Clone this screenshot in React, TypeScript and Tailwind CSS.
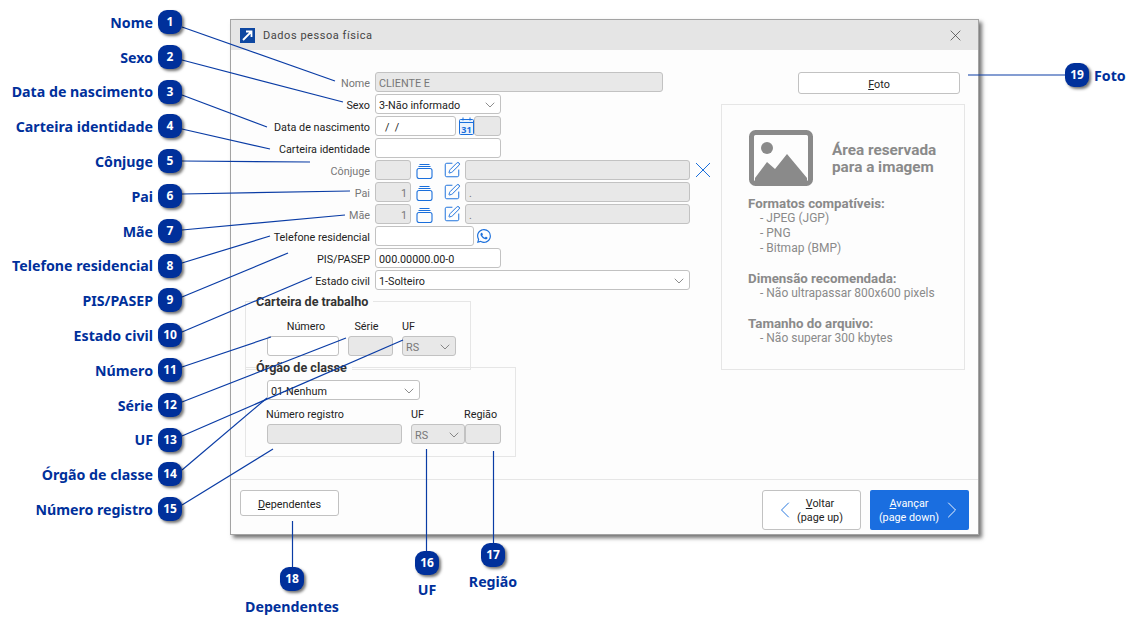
import { ReactNode } from "react"
import { ChevronDown, ChevronLeft, ChevronRight, SquarePen } from "lucide-react"
import { BsWhatsapp } from "react-icons/bs"

const leftCallouts = [
  "Nome", "Sexo", "Data de nascimento", "Carteira identidade", "Cônjuge", "Pai", "Mãe",
  "Telefone residencial", "PIS/PASEP", "Estado civil", "Número", "Série", "UF",
  "Órgão de classe", "Número registro",
]

// leader lines, from the badge to the field it explains
const leaders = [
  [182, 27, 335, 81],
  [182, 60, 343, 102],
  [182, 95, 267, 127],
  [182, 129, 270, 149],
  [182, 161, 310, 162],
  [182, 194, 350, 191],
  [182, 230, 345, 215],
  [182, 263, 270, 236],
  [182, 297, 288, 253],
  [182, 332, 312, 277],
  [182, 367, 271, 337],
  [182, 402, 346, 338],
  [182, 436, 403, 340],
  [182, 470, 267, 398],
  [182, 505, 273, 449],
  [426.5, 449, 426.5, 552],
  [493.5, 451, 493.5, 544],
  [292.5, 521, 292.5, 568],
  [968, 75, 1066, 75],
]

function Badge({ n }: { n: number }) {
  return (
    <div className="flex h-[24px] w-[24px] shrink-0 items-center justify-center rounded-[9px] bg-[#00309b] text-[12px] font-bold text-white shadow-[2px_2px_3px_rgba(0,0,0,0.55)]">
      {n}
    </div>
  )
}

function Caption({ children }: { children: ReactNode }) {
  return <span className="pt-[2px] text-[14.2px] leading-none font-bold whitespace-nowrap text-[#00309b]">{children}</span>
}

function Field({ width, disabled, children, trailing, className = "" }: { width: string; disabled?: boolean; children?: ReactNode; trailing?: ReactNode; className?: string }) {
  return (
    <div
      className={`flex h-[20px] shrink-0 items-center rounded-[3px] border border-[#c2c2c2] px-[3px] pt-[1px] text-[10.8px] ${width} ${
        disabled ? "bg-[#e8e8e8] text-[#777777]" : "bg-white text-[#222222]"
      } ${className}`}
    >
      <span className="pt-[4px] whitespace-pre">{children}</span>
      {trailing}
    </div>
  )
}

function Select({ width, disabled, value }: { width: string; disabled?: boolean; value: string }) {
  return (
    <Field
      width={width}
      disabled={disabled}
      className="justify-between"
      trailing={<ChevronDown size={16} strokeWidth={1} className="mr-[-1px] text-[#555555]" />}
    >
      {value}
    </Field>
  )
}

function Row({ label, muted, children }: { label: string; muted?: boolean; children: ReactNode }) {
  return (
    <div className="flex h-[20px] items-center">
      <span className={`w-[139px] pt-[5px] text-right text-[10.8px] ${muted ? "text-[#777777]" : "text-[#222222]"}`}>{label}</span>
      <div className="ml-[5px] flex items-center">{children}</div>
    </div>
  )
}

function Cross({ size, className }: { size: number; className: string }) {
  return (
    <svg width={size} height={size} viewBox="0 0 16 16" fill="none" stroke="currentColor" strokeWidth="1" className={`shrink-0 ${className}`}>
      <path d="M1 1 L15 15 M15 1 L1 15" />
    </svg>
  )
}

function StackIcon() {
  return (
    <svg width="17" height="17" viewBox="0 0 17 17" fill="none" stroke="#1a6fdc" strokeWidth="1.1" className="ml-[5px] shrink-0">
      <rect x="1" y="6.5" width="15" height="10" rx="2" />
      <path d="M2.5 4.5h12M3.5 2.5h10" />
    </svg>
  )
}

function PersonTools({ code }: { code?: string }) {
  return (
    <>
      <Field width="w-[36px]" disabled className="justify-end">{code}</Field>
      <StackIcon />
      <SquarePen size={18} strokeWidth={1.3} className="ml-[10px] shrink-0 text-[#1a6fdc]" />
    </>
  )
}

function CalendarIcon() {
  return (
    <svg width="15" height="19" viewBox="0 0 15 19" className="ml-[3px] mt-[1px] shrink-0">
      <rect x="0.5" y="2.5" width="14" height="15" rx="1" fill="#eaf2fd" stroke="#1a6fdc" />
      <path d="M0.5 5.5h14M4 0.5v3M11 0.5v3" stroke="#1a6fdc" fill="none" />
      <text x="7.5" y="15.5" textAnchor="middle" fontSize="9" fontWeight="700" fill="#1a6fdc" fontFamily="Noto Sans, sans-serif">31</text>
    </svg>
  )
}

function ImageIcon() {
  return (
    <svg width="64" height="56" viewBox="0 0 64 56" className="shrink-0">
      <rect x="2.5" y="2.5" width="59" height="51" rx="4" fill="#fdfdfd" stroke="#8a8a8a" strokeWidth="5" />
      <circle cx="18" cy="18" r="6" fill="#8a8a8a" />
      <path d="M6 48 L18 32 L26 39 L38 24 L58 48 V52 H6 Z" fill="#8a8a8a" />
    </svg>
  )
}

function Group({ title, className, children }: { title: string; className: string; children: ReactNode }) {
  return (
    <div className={`relative ml-[14px] border border-[#e6e6e6] ${className}`}>
      <span className="absolute top-[-7px] left-[10px] bg-[#fdfdfd] pr-[5px] text-[12.6px] leading-[14px] font-bold text-[#333333]">{title}</span>
      {children}
    </div>
  )
}

function Button({ children, className = "" }: { children: ReactNode; className?: string }) {
  return (
    <div className={`flex items-center rounded-[3px] border border-[#c2c2c2] bg-white text-[10.8px] text-[#222222] ${className}`}>
      {children}
    </div>
  )
}

function Dialog() {
  return (
    <div className="absolute top-[19px] left-[230px] flex h-[516px] w-[749px] flex-col border border-[#a3a3a3] bg-[#fdfdfd] font-['Roboto',sans-serif] shadow-[3px_3px_4px_rgba(0,0,0,0.55)]">
      <div className="flex h-[30px] shrink-0 items-center bg-[#e5e5e5] pr-[17px] pl-[9px]">
        <svg width="15" height="15" viewBox="0 0 15 15" className="shrink-0">
          <rect width="15" height="15" fill="#0d47a1" />
          <path d="M3 12 L11 4 M6 3.5 H11.5 V9" stroke="#ffffff" strokeWidth="1.8" fill="none" />
        </svg>
        <span className="ml-[8px] pt-[3px] text-[11px] tracking-[0.55px] text-[#444444]">Dados pessoa física</span>
        <Cross size={11} className="ml-auto text-[#333333]" />
      </div>

      <div className="flex flex-1">
        <div className="w-[484px] shrink-0 pt-[22px]">
          <div className="flex flex-col gap-[2px]">
            <Row label="Nome" muted><Field width="w-[288px]" disabled>CLIENTE E</Field></Row>
            <Row label="Sexo"><Select width="w-[126px]" value="3-Não informado" /></Row>
            <Row label="Data de nascimento">
              <Field width="w-[81px]" className="pl-[9px]">/  /</Field>
              <CalendarIcon />
              <Field width="w-[27px]" disabled />
            </Row>
            <Row label="Carteira identidade"><Field width="w-[126px]" /></Row>
            <Row label="Cônjuge" muted>
              <PersonTools />
              <Field width="w-[225px]" disabled className="ml-[4px]" />
              <Cross size={16} className="ml-[5px] text-[#1a6fdc]" />
            </Row>
            <Row label="Pai" muted>
              <PersonTools code="1" />
              <Field width="w-[225px]" disabled className="ml-[4px]">.</Field>
            </Row>
            <Row label="Mãe" muted>
              <PersonTools code="1" />
              <Field width="w-[225px]" disabled className="ml-[4px]">.</Field>
            </Row>
            <Row label="Telefone residencial">
              <Field width="w-[99px]" />
              <BsWhatsapp size={14} className="ml-[3px] text-[#1a6fdc]" />
            </Row>
            <Row label="PIS/PASEP"><Field width="w-[126px]">000.00000.00-0</Field></Row>
            <Row label="Estado civil"><Select width="w-[315px]" value="1-Solteiro" /></Row>
          </div>

          <Group title="Carteira de trabalho" className="mt-[11px] h-[69px] w-[226px]">
            <div className="flex gap-[9px] pt-[16px] pl-[21px] text-[10.8px] text-[#222222]">
              <div className="w-[72px]">
                <div className="h-[18px] pl-[6px] text-center leading-[18px]">Número</div>
                <Field width="w-[72px]" />
              </div>
              <div className="w-[45px]">
                <div className="h-[18px] pr-[8px] text-center leading-[18px]">Série</div>
                <Field width="w-[45px]" disabled />
              </div>
              <div className="w-[54px]">
                <div className="h-[18px] leading-[18px]">UF</div>
                <Select width="w-[54px]" disabled value="RS" />
              </div>
            </div>
          </Group>

          <Group title="Órgão de classe" className="mt-[-3px] h-[90px] w-[271px]">
            <div className="pt-[12px] pl-[21px] text-[10.8px] text-[#222222]">
              <Select width="w-[153px]" value="01-Nenhum" />
              <div className="mt-[5px] flex">
                <div className="w-[135px]">
                  <div className="ml-[-1px] h-[19px] leading-[19px]">Número registro</div>
                  <Field width="w-[135px]" disabled />
                </div>
                <div className="ml-[9px] w-[54px]">
                  <div className="h-[19px] leading-[19px]">UF</div>
                  <Select width="w-[54px]" disabled value="RS" />
                </div>
                <div className="w-[36px]">
                  <div className="ml-[-1px] h-[19px] leading-[19px]">Região</div>
                  <Field width="w-[36px]" disabled />
                </div>
              </div>
            </div>
          </Group>
        </div>

        <div className="flex-1 pt-[22px] pl-[6px]">
          <Button className="ml-[77px] h-[22px] w-[162px] justify-center pt-[5px]"><span><u>F</u>oto</span></Button>
          <div className="mt-[10px] h-[266px] w-[244px] border border-[#e6e6e6] pt-[25px] pl-[26px] text-[12px] leading-[15px] text-[#8a8a8a]">
            <div className="flex items-center pl-[1px]">
              <ImageIcon />
              <div className="ml-[19px] pt-[2px] text-[15.3px] leading-[17px] font-bold">Área reservada<br />para a imagem</div>
            </div>
            <div className="mt-[10px] text-[13.3px] font-bold">Formatos compatíveis:</div>
            <div className="pl-[12px]">- JPEG (JGP)</div>
            <div className="pl-[12px]">- PNG</div>
            <div className="pl-[12px]">- Bitmap (BMP)</div>
            <div className="mt-[15px] text-[13.3px] font-bold">Dimensão recomendada:</div>
            <div className="pl-[12px]">- Não ultrapassar 800x600 pixels</div>
            <div className="mt-[15px] text-[13.3px] font-bold">Tamanho do arquivo:</div>
            <div className="pl-[12px]">- Não superar 300 kbytes</div>
          </div>
        </div>
      </div>

      <div className="flex h-[55px] shrink-0 border-t border-[#e6e6e6] pt-[10px] pr-[9px] pl-[9px]">
        <Button className="h-[26px] w-[99px] justify-center pt-[4px]"><span><u>D</u>ependentes</span></Button>
        <Button className="ml-auto h-[40px] w-[99px] pl-[16px]">
          <ChevronLeft size={28} strokeWidth={0.8} className="mx-[-8px] shrink-0 text-[#1a6fdc]" />
          <span className="ml-[5px] w-[48px] pt-[2px] text-center leading-[14px] whitespace-nowrap"><u>V</u>oltar<br />(page up)</span>
        </Button>
        <div className="ml-[9px] flex h-[40px] w-[99px] items-center rounded-[2px] bg-[#1a6ee0] pl-[7px] text-[10.8px] text-white">
          <span className="w-[64px] pt-[2px] text-center leading-[14px] whitespace-nowrap"><u>A</u>vançar<br />(page down)</span>
          <ChevronRight size={28} strokeWidth={0.8} className="mx-[-8px] ml-[-3px] shrink-0" />
        </div>
      </div>
    </div>
  )
}

export default function App() {
  return (
    <div className="relative h-[633px] w-[1142px] overflow-hidden bg-white font-['Noto_Sans',sans-serif]">
      <Dialog />

      <svg className="pointer-events-none absolute inset-0 h-full w-full" viewBox="0 0 1142 633">
        {leaders.map(([x1, y1, x2, y2], i) => (
          <line key={i} x1={x1} y1={y1} x2={x2} y2={y2} stroke="#0a3ca5" strokeWidth="1.2" />
        ))}
      </svg>

      <div className="absolute top-[10px] left-0 flex w-[182px] flex-col gap-[10.8px]">
        {leftCallouts.map((label, i) => (
          <div key={label} className="flex h-[24px] items-center justify-end gap-[5px]">
            <Caption>{label}</Caption>
            <Badge n={i + 1} />
          </div>
        ))}
      </div>

      <div className="absolute top-[551px] left-[415px] flex w-[24px] flex-col items-center gap-[6px]">
        <Badge n={16} />
        <Caption>UF</Caption>
      </div>
      <div className="absolute top-[543px] left-[481px] flex w-[24px] flex-col items-center gap-[6px]">
        <Badge n={17} />
        <Caption>Região</Caption>
      </div>
      <div className="absolute top-[567px] left-[280px] flex w-[24px] flex-col items-center gap-[7px]">
        <Badge n={18} />
        <Caption>Dependentes</Caption>
      </div>
      <div className="absolute top-[63px] left-[1065px] flex items-center gap-[5px]">
        <Badge n={19} />
        <Caption>Foto</Caption>
      </div>
    </div>
  )
}
